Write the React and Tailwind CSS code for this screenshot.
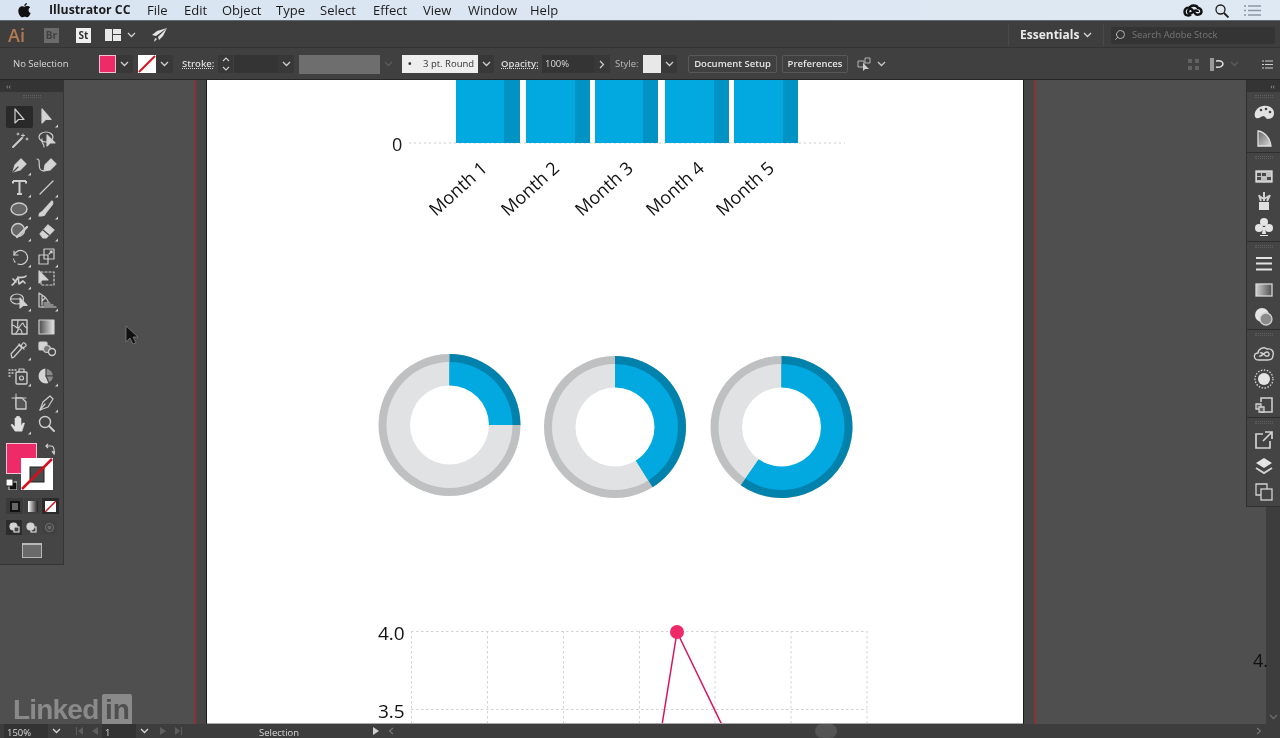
import React from 'react';
import { Search } from 'lucide-react';

const Chev = ({ className = 'text-[#d0d0d0]' }) => (
  <svg width="9" height="6" viewBox="0 0 9 6" className={className} fill="none" stroke="currentColor" strokeWidth="1.3">
    <path d="M1 1l3.5 3.5L8 1" />
  </svg>
);

// one tool glyph, 22x22, corner = the small flyout triangle
const G = ({ children, corner }) => (
  <svg width="26" height="22" viewBox="0 0 26 22" fill="none" stroke="#cdcdcd" strokeWidth="1.2" strokeLinejoin="round" strokeLinecap="round">
    {children}
    {corner && <path d="M24 18.5v3h-3z" fill="#cfcfcf" stroke="none" />}
  </svg>
);

const tools = [
  {
    mt: 'mt-0',
    l: <G><path d="M8 3v14l3.5-3.5H17z" fill="#2a2a2a" /></G>,
    r: <G corner><path d="M8 3v14l3.5-3.5H17z" fill="#d4d4d4" /></G>,
    active: true,
  },
  {
    mt: 'mt-px',
    l: <G><path d="M6 18l9-9" strokeWidth="2" /><path d="M16 5v3M14.500 6.500h3M11 4v2M20 9v2M10 5h2M19 10h2" strokeWidth="1" /></G>,
    r: <G><ellipse cx="12" cy="8" rx="7" ry="5" /><path d="M8 10c-2 4 3 5 2 8" /><path d="M13 6v11l3-3h5z" fill="#d4d4d4" /></G>,
  },
  {
    mt: 'mt-[3px]',
    l: <G corner><path d="M6 18l2-7 6-6 5 5-6 6z" fill="#d4d4d4" /><path d="M6 18l5-5" stroke="#444" /></G>,
    r: <G><path d="M3 5c4 0 1 7 3 10s5 2 5 0" /><path d="M10 17l1-6 6-6 5 5-6 6z" fill="#d4d4d4" /></G>,
  },
  {
    mt: 'mt-0',
    l: <G corner><path d="M6 5h13M12.500 5v13M10 18h5M6 5v2.500M19 5v2.500" strokeWidth="2" strokeLinecap="butt" /></G>,
    r: <G corner><path d="M6 18L19 5" strokeWidth="1.3" /></G>,
  },
  {
    mt: 'mt-0',
    l: <G corner><ellipse cx="12" cy="11" rx="8" ry="6" fill="#666" strokeWidth="1.400" /></G>,
    r: <G corner><path d="M8 14L18 3c1 1 1 3 0 4l-7 9z" fill="#d4d4d4" /><path d="M5 18c0-3 2-4 3-4l3 2c0 2-3 2-6 2z" fill="#d4d4d4" /></G>,
  },
  {
    mt: 'mt-0',
    l: <G corner><circle cx="11" cy="10" r="6.500" fill="#666" strokeWidth="1.400" /><path d="M10 17L20 7" strokeWidth="2.400" /></G>,
    r: <G corner><path d="M6 14l8-9 6 5-8 8H9z" fill="#d4d4d4" /><path d="M9 10l6 5" stroke="#444" /></G>,
  },
  {
    mt: 'mt-[4px]',
    l: <G corner><path d="M7 5v4h4" /><path d="M7 9a7 7 0 1 1 4 9" /><path d="M8 16a7 7 0 0 1-1.500-3" strokeDasharray="1.500 1.500" /></G>,
    r: <G corner><rect x="5" y="9" width="9" height="9" /><rect x="10" y="3" width="10" height="10" /><path d="M15 8l3-3M16 5h2v2" /></G>,
  },
  {
    mt: 'mt-0',
    l: <G corner><path d="M5 17c3-1 3-5 6-7s5 1 8-2M6 11l3 3M11 9l1 7 4-3 2 2" strokeWidth="1.700" /></G>,
    r: <G><rect x="7" y="4" width="13" height="13" strokeDasharray="2 2" /><path d="M5 3v12l3-3h6z" fill="#d4d4d4" /></G>,
  },
  {
    mt: 'mt-0',
    l: <G corner><ellipse cx="10" cy="9" rx="6.500" ry="5" /><path d="M4 9h9" /><path d="M13 8v10l3-2.500h4z" fill="#d4d4d4" /></G>,
    r: <G corner><path d="M5 3v14h4M5 3l6 4 3 4v1M8 5v10M11 8l-3 3" /><path d="M10 13h6M10 15h9M8 17h14" /></G>,
  },
  {
    mt: 'mt-[4px]',
    l: <G><rect x="5" y="4" width="15" height="14" strokeWidth="1.400" /><path d="M5 9c3 0 4 3 6 3s3-5 5-5M11 4c0 3-1 3 0 8s-3 3-2 6M16 7c1 3 1 4 4 5M12 13c2 0 3 2 3 5" /></G>,
    r: <G><defs><linearGradient id="gr" x1="0" x2="1"><stop offset="0" stopColor="#4a4a4a" /><stop offset="1" stopColor="#e8e8e8" /></linearGradient></defs><rect x="5" y="4" width="15" height="14" fill="url(#gr)" strokeWidth="1.200" /></G>,
  },
  {
    mt: 'mt-px',
    l: <G corner><path d="M5 19l2-1 8-9-3-3-8 9zM12 5l5 5M14 7l2-3c1-1 4 2 3 3l-3 2" fill="#444" /></G>,
    r: <G><rect x="5" y="3" width="8" height="8" rx="1" fill="#d4d4d4" /><circle cx="13" cy="10" r="3.500" fill="#777" /><circle cx="18" cy="13" r="3.500" fill="#444" strokeWidth="1.400" /></G>,
  },
  {
    mt: 'mt-[4px]',
    l: <G corner><path d="M2 5h1M5 5h1M8 5h1M2 8h1M5 8h1M2 11h1" strokeWidth="1.400" /><rect x="9" y="7" width="11" height="12" rx="1" strokeWidth="1.400" /><path d="M12 7V4h5v3" /><circle cx="14.500" cy="13" r="2" /></G>,
    r: <G corner><circle cx="12" cy="11" r="7.500" fill="#d4d4d4" stroke="none" /><path d="M12 11V3.500A7.500 7.500 0 0 1 19.500 11z" fill="#8a8a8a" stroke="#444" /><path d="M12 11h7.500A7.500 7.500 0 0 1 15 18z" fill="#8a8a8a" stroke="#444" /></G>,
  },
  {
    mt: 'mt-[4px]',
    l: <G><path d="M5 7h14M9 3v13" strokeWidth="1" /><path d="M9 7h6l4 4v7H9z" fill="#555" strokeWidth="1.300" /></G>,
    r: <G corner><path d="M6 19l3-8 7-6 3 3-5 8z" fill="#444" /><path d="M6 19l5-6" /></G>,
  },
  {
    mt: 'mt-0',
    l: <G corner><path d="M8 18l-4-6 1-1 3 3V5h1.500v6V3.500H11V11V3.500h1.500V11V5H14v8l2-3h1.500L15 18z" fill="#e0e0e0" stroke="#e0e0e0" strokeWidth="0.600" /></G>,
    r: <G><circle cx="11" cy="9" r="5.500" strokeWidth="1.400" /><path d="M15 13l5 5" strokeWidth="2" /></G>,
  },
];

const Dock = ({ children, className }) => (
  <div className={`flex flex-col items-center border-b border-[#2e2e2e] ${className}`}>
    <div className="w-[18px] h-[3px] mt-[3px] border-y border-dotted border-[#5f5f5f]" />
    {children}
  </div>
);

const DockIcon = ({ mt, children }) => (
  <svg width="22" height="22" viewBox="0 0 22 22" className={mt} fill="none" stroke="#d2d2d2" strokeWidth="1.300">
    {children}
  </svg>
);

const Donut = ({ cx, cy, deg }) => {
  const sector = (r) => {
    const a = (deg * Math.PI) / 180;
    const x = cx + r * Math.sin(a);
    const y = cy - r * Math.cos(a);
    return `M${cx} ${cy}L${cx} ${cy - r}A${r} ${r} 0 ${deg > 180 ? 1 : 0} 1 ${x} ${y}Z`;
  };
  return (
    <g>
      <circle cx={cx} cy={cy} r="71" fill="#bfc0c2" />
      <circle cx={cx} cy={cy} r="63" fill="#e1e2e4" />
      <path d={sector(71)} fill="#0082ad" />
      <path d={sector(63)} fill="#02a9e1" />
      <circle cx={cx} cy={cy} r="39.500" fill="#fff" />
    </g>
  );
};

const bars = [
  [456, 504, 520],
  [526, 575, 590],
  [595, 643, 658],
  [665, 714, 729],
  [734, 783, 798],
];

const Artboard = () => (
  <svg viewBox="207 80 816 644" className="w-[816px] h-[644px] block" fontFamily="Open Sans, sans-serif">
    <rect x="207" y="80" width="816" height="644" fill="#fff" />
    <path d="M409 143H845" stroke="#c9cbce" strokeWidth="1" strokeDasharray="2 3" />
    {bars.map((b) => (
      <g key={b[0]}>
        <rect x={b[0]} y="80" width={b[1] - b[0]} height="63" fill="#02a9e1" />
        <rect x={b[1]} y="80" width={b[2] - b[1]} height="63" fill="#0093c4" />
      </g>
    ))}
    <text x="392" y="151" fontSize="18" fill="#1a1a1a">0</text>
    {[
      ['Month 1', 436, 217],
      ['Month 2', 508, 217],
      ['Month 3', 582, 217],
      ['Month 4', 653, 217],
      ['Month 5', 723, 217],
    ].map(([t, x, y]) => (
      <text key={t} x={x} y={y} fontSize="18" fill="#111" transform={`rotate(-42 ${x} ${y})`}>{t}</text>
    ))}

    <Donut cx={449.5} cy={425} deg={90} />
    <Donut cx={615} cy={427} deg={148} />
    <Donut cx={781.5} cy={427} deg={215} />

    <g stroke="#d2d3d5" strokeWidth="1" strokeDasharray="2.500 2.500" fill="none">
      <path d="M411 631.500H867M411 709.500H867" />
      <path d="M411.500 631V724M487.500 631V724M563.500 631V724M639.500 631V724M715 631V724M791 631V724M867 631V724" />
    </g>
    <path d="M677 632L662 725M677 632L722 725" stroke="#d6155f" strokeWidth="1.500" fill="none" />
    <circle cx="677" cy="632" r="7" fill="#ee2a68" />
    <text x="378" y="640" fontSize="19" fill="#111">4.0</text>
    <text x="378" y="718" fontSize="19" fill="#111">3.5</text>
  </svg>
);

const App = () => {
  return (
    <div className="w-[1280px] h-[738px] overflow-hidden flex flex-col font-['Open_Sans',sans-serif] bg-[#4f4f4f] text-[#dcdcdc] blur-[0.3px]">
      {/* mac menu bar */}
      <div className="h-[21px] flex items-center pt-[1px] bg-gradient-to-r from-[#d9e4f2] to-[#dfe9f3] border-b border-[#5f6b70] text-[#1c1c1c] text-[13px] shrink-0">
        <svg width="13" height="15" viewBox="0 0 13 15" className="ml-[18px] mr-[18px]" fill="#111">
          <path d="M9 0c.1 1.500-1.200 3-2.700 2.900C6.100 1.500 7.500.1 9 0zM6.500 3.800c.7 0 1.700-.8 3-.7 1 0 2 .5 2.600 1.400-2.300 1.400-1.900 4.600.6 5.600-.6 1.600-2 4.200-3.400 4.200-.9 0-1.400-.6-2.500-.6s-1.700.6-2.500.6C2.500 14.300.3 10.800.3 8c0-2.900 1.900-4.800 3.800-4.800 1 0 1.800.6 2.400.6z" />
        </svg>
        <span className="font-bold text-[12.3px] w-[98px]">Illustrator CC</span>
        <span className="w-[37px]">File</span>
        <span className="w-[38px]">Edit</span>
        <span className="w-[54px]">Object</span>
        <span className="w-[44px]">Type</span>
        <span className="w-[53px]">Select</span>
        <span className="w-[50px]">Effect</span>
        <span className="w-[45px]">View</span>
        <span className="w-[62px]">Window</span>
        <span>Help</span>
        <svg width="20" height="14" viewBox="0 0 20 14" className="ml-auto" fill="none" stroke="#111" strokeWidth="2.400">
          <path d="M8 10.500c-3 2-6.500 1-6.500-3 0-3 3-4.500 5-3.500 1-3 7-3.500 8.500 0 2.500 0 3.500 2 3.500 3.500 0 3-4 4-6 2.500L9 5.500C7 4 5 5.500 5 7.500c0 2 2 2.500 3.500 1.500L11 7c1.500-1 4-.5 4 1" />
        </svg>
        <svg width="14" height="14" viewBox="0 0 14 14" className="ml-[12px]" fill="none" stroke="#1c1c1c" strokeWidth="1.300">
          <circle cx="5.500" cy="5.500" r="4.500" />
          <path d="M9 9l4.500 4.500" strokeWidth="1.800" />
        </svg>
        <svg width="17" height="11" viewBox="0 0 17 11" className="ml-[15px] mr-[19px]" stroke="#8b97a3" strokeWidth="1.300">
          <path d="M0 1h2M4 1h13M0 5.500h2M4 5.500h13M0 10h2M4 10h13" />
        </svg>
      </div>

      {/* app bar */}
      <div className="h-[27px] flex items-center pt-[2px] bg-[#3e3e3e] border-b border-[#333] shrink-0">
        <span className="ml-[8px] w-[36px] text-[18px] font-semibold text-[#b67a52]">Ai</span>
        <span className="w-[15px] h-[15px] bg-[#6b6b6b] text-[#404040] text-[10px] font-bold flex items-center justify-center">Br</span>
        <span className="ml-[17px] w-[15px] h-[15px] bg-[#efefef] text-[#333] text-[10px] font-bold flex items-center justify-center">St</span>
        <svg width="16" height="12" viewBox="0 0 16 12" className="ml-[14px]" fill="#e8e8e8">
          <path d="M0 0h7v12H0zM8 0h8v5H8zM8 6h8v6H8z" />
        </svg>
        <Chev className="ml-[6px] text-[#d0d0d0]" />
        <svg width="16" height="15" viewBox="0 0 16 15" className="ml-[15px]" fill="#e4e4e4">
          <path d="M16 0L6 3 1 7l4 1zM16 0L7 9l1 3 4-4zM4 10l2 1-3 3z" />
        </svg>
        <div className="ml-[841px] w-px h-[22px] bg-[#4a4a4a]" />
        <span className="ml-[11px] w-[63px] text-[12px] font-bold text-[#eaeaea]">Essentials</span>
        <Chev className="text-[#d8d8d8]" />
        <div className="ml-[11px] w-px h-[22px] bg-[#4a4a4a]" />
        <div className="ml-[7px] w-[164px] h-[17px] bg-[#343434] rounded-[2px] flex items-center pl-[3px]">
          <Search size={12} strokeWidth={1.6} className="text-[#cfcfcf] -scale-x-100" />
          <span className="ml-[6px] text-[9.25px] text-[#777]">Search Adobe Stock</span>
        </div>
      </div>

      {/* control bar */}
      <div className="h-[32px] flex items-center pt-[1px] bg-[#404040] border-b border-[#262626] text-[9.5px] shrink-0 relative">
        <span className="ml-[13px] w-[86px] text-[#d8d8d8]">No Selection</span>
        <div className="w-[17px] h-[18px] bg-[#ee2a68] border border-[#f0c0d0]" />
        <div className="w-[17px] h-[18px] bg-[#383838] flex items-center justify-center"><Chev /></div>
        <svg width="18" height="18" viewBox="0 0 18 18" className="ml-[5px]">
          <rect width="18" height="18" fill="#fff" />
          <path d="M1 17L17 1" stroke="#d4121e" strokeWidth="2" />
        </svg>
        <div className="w-[17px] h-[18px] bg-[#383838] flex items-center justify-center"><Chev /></div>
        <span className="ml-[9px] w-[36px] font-semibold underline decoration-dotted text-[#dcdcdc]">Stroke:</span>
        <div className="w-[15px] h-[18px] bg-[#383838] flex items-center justify-center">
          <svg width="8" height="14" viewBox="0 0 8 14" fill="none" stroke="#d0d0d0" strokeWidth="1.100"><path d="M1 4l3-3 3 3M1 10l3 3 3-3" /></svg>
        </div>
        <div className="ml-px w-[44px] h-[18px] bg-[#343434]" />
        <div className="w-[16px] h-[18px] bg-[#383838] flex items-center justify-center"><Chev /></div>
        <div className="ml-[5px] w-[81px] h-[19px] bg-[#6e6e6e]" />
        <div className="w-[16px] h-[18px] flex items-center justify-center"><Chev className="text-[#5c5c5c]" /></div>
        <div className="ml-[6px] w-[76px] h-[18px] bg-[#eeeeee] text-[#333] flex items-center pl-[6px]">
          <span className="w-[15px] font-bold">•</span>3 pt. Round
        </div>
        <div className="w-[16px] h-[18px] bg-[#383838] flex items-center justify-center"><Chev /></div>
        <span className="ml-[7px] w-[41px] font-semibold underline decoration-dotted text-[#dcdcdc]">Opacity:</span>
        <div className="w-[52px] h-[18px] bg-[#343434] flex items-center pl-[3px] text-[#dcdcdc]">100%</div>
        <div className="w-[16px] h-[18px] bg-[#383838] flex items-center justify-center">
          <svg width="6" height="9" viewBox="0 0 6 9" fill="none" stroke="#d0d0d0" strokeWidth="1.200"><path d="M1 1l3.500 3.500L1 8" /></svg>
        </div>
        <span className="ml-[5px] w-[28px] text-[#bdbdbd]">Style:</span>
        <div className="w-[18px] h-[18px] bg-[#e8e8e8]" />
        <div className="w-[16px] h-[18px] bg-[#383838] flex items-center justify-center"><Chev /></div>
        <button className="ml-[11px] w-[89px] h-[18px] border border-[#585858] rounded-[2px] font-semibold text-[#e6e6e6] flex items-center justify-center">Document Setup</button>
        <button className="ml-[5px] w-[66px] h-[18px] border border-[#585858] rounded-[2px] font-semibold text-[#e6e6e6] flex items-center justify-center">Preferences</button>
        <svg width="16" height="14" viewBox="0 0 16 14" className="ml-[9px]" fill="none" stroke="#b5b5b5">
          <path d="M1 4h6v6H1zM8 1h5v5H8z" />
          <path d="M6 6v8l2-2h4z" fill="#cfcfcf" stroke="none" />
        </svg>
        <Chev className="ml-[4px] text-[#c8c8c8]" />
        <svg width="11" height="11" viewBox="0 0 11 11" className="ml-[302px]" fill="#616161">
          <path d="M0 0h4v4H0zM7 0h4v4H7zM0 7h4v4H0zM7 7h4v4H7z" />
        </svg>
        <svg width="14" height="13" viewBox="0 0 14 13" className="ml-[11px]" fill="none">
          <path d="M0 0h4v13H0z" fill="#9a9a9a" />
          <path d="M6 3c5-1 7 1 7 3s-3 4-7 3" stroke="#e0e0e0" strokeWidth="1.500" />
        </svg>
        <Chev className="ml-[6px] text-[#5c5c5c]" />
        <svg width="11" height="9" viewBox="0 0 11 9" className="ml-[23px]" stroke="#cfcfcf">
          <path d="M0 1h2M3 1h8M0 4.500h2M3 4.500h8M0 8h2M3 8h8" />
        </svg>
      </div>

      {/* work area */}
      <div className="h-[644px] flex relative shrink-0">
        {/* tools */}
        <div className="w-[64px] h-[485px] bg-[#454545] border-r border-b border-[#353535] shrink-0 flex flex-col">
          <div className="h-[12px] bg-[#343434] text-[#a0a0a0] text-[8px] leading-[12px] pl-[6px]">‹‹</div>
          <div className="w-[18px] h-[3px] ml-[23px] mt-[3px] border-y border-dotted border-[#5f5f5f]" />
          <div className="mt-[8px] flex flex-col">
            {tools.map((t, i) => (
              <div key={i} className={`flex h-[22px] pl-[6px] ${t.mt}`}>
                <div className={`w-[27px] h-[22px] flex items-center justify-center rounded-[2px] ${t.active ? 'bg-[#292929]' : ''}`}>{t.l}</div>
                <div className="w-[27px] h-[22px] flex items-center justify-center">{t.r}</div>
              </div>
            ))}
          </div>

          {/* fill and stroke */}
          <div className="relative h-[50px] mt-[8px]">
            <div className="absolute left-[6px] top-0 w-[31px] h-[31px] bg-[#ee2a68] border border-[#f5c4d4]" />
            <svg width="32" height="32" viewBox="0 0 32 32" className="absolute left-[21px] top-[15px]">
              <path d="M0 0h32v32H0zM9 9v15h14V9z" fill="#fff" fillRule="evenodd" />
              <rect x="9" y="9" width="14" height="15" fill="#4a4a4a" stroke="#222" />
              <path d="M1 31L31 1" stroke="#d4121e" strokeWidth="2.500" />
            </svg>
            <svg width="11" height="11" viewBox="0 0 11 11" className="absolute left-[6px] top-[36px]">
              <rect x="3" y="3" width="8" height="8" fill="#111" stroke="#ddd" />
              <rect x="0" y="0" width="7" height="7" fill="#fff" stroke="#222" />
            </svg>
            <svg width="10" height="12" viewBox="0 0 10 12" className="absolute left-[45px] top-[0px]" fill="none" stroke="#cfcfcf" strokeWidth="1.200">
              <path d="M1 3h5c2 0 3 1 3 4v3M7 8l2 3 1-3M3 1L1 3l2 2" />
            </svg>
          </div>

          {/* colour modes */}
          <div className="flex mt-[5px] ml-[6px] gap-px">
            <div className="w-[17px] h-[16px] bg-[#3a3a3a] flex items-center justify-center">
              <div className="w-[10px] h-[11px] border-[2.500px] border-[#111] bg-[#666]" />
            </div>
            <div className="w-[17px] h-[16px] bg-[#3f3f3f] flex items-center justify-center">
              <div className="w-[10px] h-[11px] bg-gradient-to-r from-[#fff] to-[#222]" />
            </div>
            <div className="w-[17px] h-[16px] bg-[#2b2b2b] flex items-center justify-center">
              <svg width="11" height="11" viewBox="0 0 11 11"><rect width="11" height="11" fill="#fff" /><path d="M0 11L11 0" stroke="#d4121e" strokeWidth="1.500" /></svg>
            </div>
          </div>

          {/* draw modes */}
          <div className="flex mt-[6px] ml-[6px] gap-px">
            <div className="w-[16px] h-[15px] bg-[#2c2c2c] flex items-center justify-center">
              <svg width="11" height="11" viewBox="0 0 11 11" fill="none" stroke="#d4d4d4" strokeWidth="1.200"><circle cx="4.500" cy="4.500" r="3.500" fill="#d4d4d4" /><rect x="5" y="5" width="5" height="5" fill="#444" /></svg>
            </div>
            <div className="w-[17px] h-[15px] bg-[#424242] flex items-center justify-center">
              <svg width="11" height="11" viewBox="0 0 11 11" fill="none" stroke="#d4d4d4" strokeWidth="1.200"><rect x="5" y="5" width="5" height="5" fill="#444" /><circle cx="4.500" cy="4.500" r="3.500" fill="#d4d4d4" /></svg>
            </div>
            <div className="w-[16px] h-[15px] bg-[#424242] flex items-center justify-center">
              <svg width="11" height="11" viewBox="0 0 11 11" fill="none" stroke="#6a6a6a" strokeWidth="1.200"><circle cx="5.500" cy="5.500" r="4" /><circle cx="5.500" cy="5.500" r="1.500" fill="#6a6a6a" /></svg>
            </div>
          </div>

          {/* screen mode */}
          <div className="ml-[22px] mt-[8px] w-[20px] h-[15px] bg-[#6a6a6a] border border-[#b8b8b8] border-t-[2px]" />
        </div>

        {/* pasteboard and artboard */}
        <div className="w-[130px] shrink-0" />
        <div className="w-[2px] bg-[#8a3337] shrink-0" />
        <div className="w-[10px] bg-[#464646] shrink-0" />
        <div className="w-[818px] shrink-0 border-x border-[#1c1c1c] relative">
          <Artboard />
          <div className="absolute left-0 right-0 bottom-0 h-px bg-[#a8a8a8]" />
        </div>
        <div className="w-[10px] bg-[#464646] shrink-0" />
        <div className="w-[2px] bg-[#8a3337] shrink-0" />
        <div className="flex-1" />

        {/* dock */}
        <div className="w-[34px] shrink-0 flex flex-col items-end">
          <div className="w-[34px] h-[427px] bg-[#444444] border-l border-b border-[#303030] flex flex-col">
            <div className="h-[12px] bg-[#343434] text-[#a0a0a0] text-[8px] leading-[12px] text-right pr-[5px]">‹‹</div>
            <Dock className="h-[61px]">
              <DockIcon mt="mt-[4px]"><path d="M10 4c6-1 11 2 11 7s-4 6-6 6c-3 0-2-3-5-3-3 1-4 3-7 2C0 14 2 5 10 4z" fill="#e2e2e2" stroke="none" /><circle cx="8" cy="8" r="1.300" fill="#444" stroke="none" /><circle cx="13" cy="7" r="1.300" fill="#444" stroke="none" /><circle cx="17" cy="10" r="1.300" fill="#444" stroke="none" /></DockIcon>
              <DockIcon mt="mt-[4px]"><defs><linearGradient id="qg" x1="0" x2="1" y1="0" y2="1"><stop offset="0" stopColor="#666" /><stop offset="1" stopColor="#d8d8d8" /></linearGradient></defs><path d="M5 3c7 1 12 7 13 15H5z" fill="url(#qg)" stroke="#e0e0e0" /></DockIcon>
            </Dock>
            <Dock className="h-[89px]">
              <DockIcon mt="mt-[7px]"><rect x="3" y="5" width="16" height="11" fill="#bfbfbf" stroke="#e0e0e0" /><path d="M4 7h4v3H4zM9 7h4v3H9zM4 11h4v3H4zM14 11h4v3h-4z" fill="#4a4a4a" stroke="none" /></DockIcon>
              <DockIcon mt="mt-[2px]"><path d="M6 12h10v8H6z" fill="#e0e0e0" stroke="none" /><path d="M8 11L6 5M11 11V2M14 11l3-6M11 9l-5-3M11 9l5-3" strokeWidth="2" /></DockIcon>
              <DockIcon mt="mt-[4px]"><circle cx="11" cy="6" r="4" fill="#e4e4e4" stroke="none" /><circle cx="6" cy="12" r="4" fill="#e4e4e4" stroke="none" /><circle cx="16" cy="12" r="4" fill="#e4e4e4" stroke="none" /><path d="M10 11h2l1 7H9zM7 19h8v1H7z" fill="#e4e4e4" stroke="none" /></DockIcon>
            </Dock>
            <Dock className="h-[88px]">
              <DockIcon mt="mt-[5px]"><path d="M3 5h16M3 10.500h16M3 16.500h16" stroke="#e2e2e2" strokeWidth="2" /></DockIcon>
              <DockIcon mt="mt-[4px]"><defs><linearGradient id="dg" x1="0" x2="1"><stop offset="0" stopColor="#d0d0d0" /><stop offset="1" stopColor="#505050" /></linearGradient></defs><rect x="3" y="5" width="16" height="12" fill="url(#dg)" stroke="#d8d8d8" /></DockIcon>
              <DockIcon mt="mt-[5px]"><circle cx="9" cy="9" r="7" fill="#e4e4e4" stroke="none" /><circle cx="13" cy="13" r="6" fill="#8a8a8a" stroke="#d0d0d0" /></DockIcon>
            </Dock>
            <Dock className="h-[88px]">
              <DockIcon mt="mt-[6px]"><path d="M6 18c-6 0-6-7-1-7 0-4 6-7 9-4 5-1 7 3 6 6 0 3-2 5-5 5zM7 11c3-2 5 5 8 3 2-1 1-4-1-4-3 0-5 5-8 4" strokeWidth="1.400" /></DockIcon>
              <DockIcon mt="mt-[4px]"><circle cx="11" cy="11" r="6" fill="#e4e4e4" stroke="none" /><circle cx="11" cy="11" r="9" strokeDasharray="1.500 1.500" /></DockIcon>
              <DockIcon mt="mt-[4px]"><path d="M8 8V4h11v14H8v-4" strokeWidth="1.500" /><path d="M3 10h5v5H3z" fill="#666" /><path d="M6 13h5v5H6z" fill="#666" /></DockIcon>
            </Dock>
            <div className="flex flex-col items-center">
              <div className="w-[18px] h-[3px] mt-[3px] border-y border-dotted border-[#5f5f5f]" />
              <DockIcon mt="mt-[5px]"><path d="M10 5H3v14h14v-7M12 3h7v7M19 3l-9 9" strokeWidth="1.700" /></DockIcon>
              <DockIcon mt="mt-[4px]"><path d="M11 3l8 5-8 5-8-5z" fill="#e4e4e4" stroke="none" /><path d="M3 13l8 5 8-5" strokeWidth="2" /></DockIcon>
              <DockIcon mt="mt-[4px]"><path d="M8 14H3V3h11v5" /><rect x="8" y="8" width="11" height="11" /></DockIcon>
            </div>
          </div>
          <div className="w-[14px] flex-1 bg-[#3d3d3d] flex flex-col justify-end items-center pb-[4px]">
            <Chev className="text-[#6c6c6c]" />
          </div>
        </div>

        {/* things lying on the pasteboard */}
        <span className="absolute left-[1253px] top-[568px] text-[18px] leading-[24px] text-[#111]">4.</span>
        <svg width="14" height="20" viewBox="0 0 14 20" className="absolute left-[125px] top-[245px]">
          <path d="M1 1v16l4-4 3 6 3-1-3-6h5z" fill="#111" stroke="#888" strokeWidth="0.700" />
        </svg>
        <div className="absolute left-[13px] top-[614px] flex items-start h-[30px]">
          <span className="text-[28px] leading-[32px] font-bold text-[#8a8a8a] font-['Liberation_Sans',sans-serif] tracking-[-0.8px]">Linked</span>
          <span className="ml-[4px] w-[30px] h-[30px] bg-[#8a8a8a] rounded-t-[2px] text-[#4f4f4f] text-[28px] leading-[32px] font-bold font-['Liberation_Sans',sans-serif] text-center">in</span>
        </div>
      </div>

      {/* status bar */}
      <div className="h-[14px] flex items-center bg-[#3d3d3d] text-[9.5px] text-[#d8d8d8] shrink-0">
        <div className="ml-[4px] w-[44px] h-[14px] bg-[#333] pl-[3px] leading-[17px]">150%</div>
        <Chev className="ml-[4px]" />
        <svg width="24" height="8" viewBox="0 0 24 8" className="ml-[15px]" fill="#5e5e5e">
          <path d="M0 0h1v8H0zM7 0v8L2 4zM22 0v8l-6-4z" />
        </svg>
        <div className="ml-[2px] w-[34px] h-[14px] bg-[#333] pl-[3px] leading-[17px]">1</div>
        <Chev className="ml-[4px]" />
        <svg width="24" height="8" viewBox="0 0 24 8" className="ml-[11px]" fill="#5e5e5e">
          <path d="M0 0v8l6-4zM15 0v8l5-4zM21 0h1v8h-1z" />
        </svg>
        <span className="ml-[75px] w-[114px] leading-[17px] h-[14px]">Selection</span>
        <svg width="6" height="8" viewBox="0 0 6 8" fill="#cfcfcf"><path d="M0 0v8l6-4z" /></svg>
        <svg width="6" height="8" viewBox="0 0 6 8" className="ml-[9px]" fill="none" stroke="#777" strokeWidth="1.100"><path d="M5 1L1.500 4 5 7" /></svg>
        <div className="ml-[421px] w-[22px] h-[14px] rounded-full bg-[#545454]" />
        <svg width="6" height="8" viewBox="0 0 6 8" className="ml-[419px]" fill="none" stroke="#777" strokeWidth="1.100"><path d="M1 1l3.500 3L1 7" /></svg>
      </div>
    </div>
  );
};

export default App;
